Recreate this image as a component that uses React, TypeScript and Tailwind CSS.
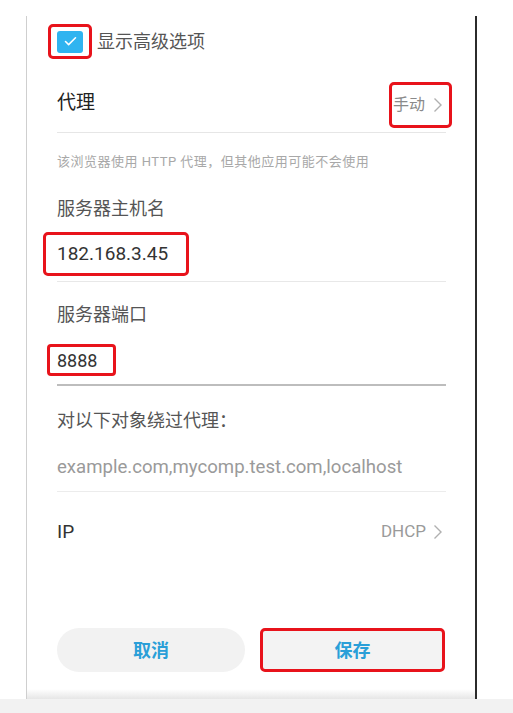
import { Check } from 'lucide-react';

const font = { fontFamily: 'Roboto, "Noto Sans CJK SC", sans-serif' };

function Arrow() {
  return (
    <svg width="10" height="16" viewBox="0 0 10 16" fill="none">
      <path d="M1.5 1.5 L8 8 L1.5 14.5" stroke="#b0b0b0" strokeWidth="1.4" />
    </svg>
  );
}

export default function App() {
  return (
    <div className="w-[513px] h-[713px] bg-white flex flex-col" style={font}>
      <div className="pt-[16px] pl-[26px]">
        <div className="relative w-[451px] h-[683px] border-l border-[#cfcfcf] border-r-2 border-r-[#2b2b2b] flex flex-col pl-[30px] pr-[29px]">
          {/* show advanced */}
          <div className="flex items-center mt-[8px] -ml-[9px]">
            <div className="w-[44px] h-[35px] border-[3px] border-[#e8131b] rounded-[5px] flex items-center justify-center">
              <div className="w-[26px] h-[22px] rounded-[3px] bg-[#2fb4f0] flex items-center justify-center">
                <Check className="w-[15px] h-[15px] text-white" strokeWidth={2.5} />
              </div>
            </div>
            <span className="ml-[5px] text-[18px] leading-[24px] text-[#555]">显示高级选项</span>
          </div>

          {/* proxy */}
          <div className="flex items-end justify-between h-[74px] pb-[4px] border-b border-[#e6e6e6]">
            <span className="h-[46px] flex items-center pb-[4px] text-[19px] text-[#222]">代理</span>
            <div className="-mr-[6px] w-[63px] h-[46px] border-[3px] border-[#e8131b] rounded-[5px] flex items-center pl-[1px]">
              <span className="text-[16px] text-[#8a8a8a]">手动</span>
              <span className="ml-[8px] flex">
                <Arrow />
              </span>
            </div>
          </div>

          <p className="mt-[20px] text-[13px] tracking-[0.5px] leading-[18px] text-[#a8a8a8]">
            该浏览器使用 HTTP 代理，但其他应用可能不会使用
          </p>

          <p className="mt-[26px] text-[18px] leading-[24px] text-[#555]">服务器主机名</p>
          <div className="mt-[11px] -ml-[14px] w-[146px] h-[44px] border-[3px] border-[#e8131b] rounded-[5px] flex items-center pl-[11px]">
            <span className="text-[19px] text-[#333]">182.168.3.45</span>
          </div>
          <div className="mt-[5px] border-t border-[#e8e8e8]" />

          <p className="mt-[21px] text-[18px] leading-[24px] text-[#555]">服务器端口</p>
          <div className="mt-[17px] -ml-[10px] w-[69px] h-[32px] border-[3px] border-[#e8131b] rounded-[4px] flex items-center pl-[7px]">
            <span className="text-[18px] text-[#333]">8888</span>
          </div>
          <div className="mt-[8px] border-t-2 border-[#bdbdbd]" />

          <p className="mt-[23px] text-[18px] leading-[24px] text-[#555]">对以下对象绕过代理：</p>
          <p className="mt-[22px] text-[18.6px] leading-[24px] text-[#9a9a9a]">
            example.com,mycomp.test.com,localhost
          </p>
          <div className="mt-[12px] border-t border-[#ececec]" />

          <div className="mt-[28px] flex items-center justify-between h-[24px]">
            <span className="text-[19px] text-[#333]">IP</span>
            <div className="flex items-center mr-[3px]">
              <span className="text-[17px] text-[#9a9a9a]">DHCP</span>
              <span className="ml-[7px] flex">
                <Arrow />
              </span>
            </div>
          </div>

          {/* buttons */}
          <div className="mt-[84px] flex items-center justify-between">
            <button className="w-[188px] h-[44px] rounded-full bg-[#f2f2f2] text-[18px] font-bold text-[#2a9fd8]">
              取消
            </button>
            <button className="w-[185px] h-[44px] mr-[1px] border-[3px] border-[#e8131b] rounded-[5px] bg-[#f3f3f3] text-[18px] font-bold text-[#2a9fd8]">
              保存
            </button>
          </div>

          <div className="absolute left-0 right-0 bottom-0 h-[10px] bg-gradient-to-b from-white to-[#e6e6e6]" />
        </div>
      </div>
      <div className="flex-1 bg-[#f2f2f2]" />
    </div>
  );
}
